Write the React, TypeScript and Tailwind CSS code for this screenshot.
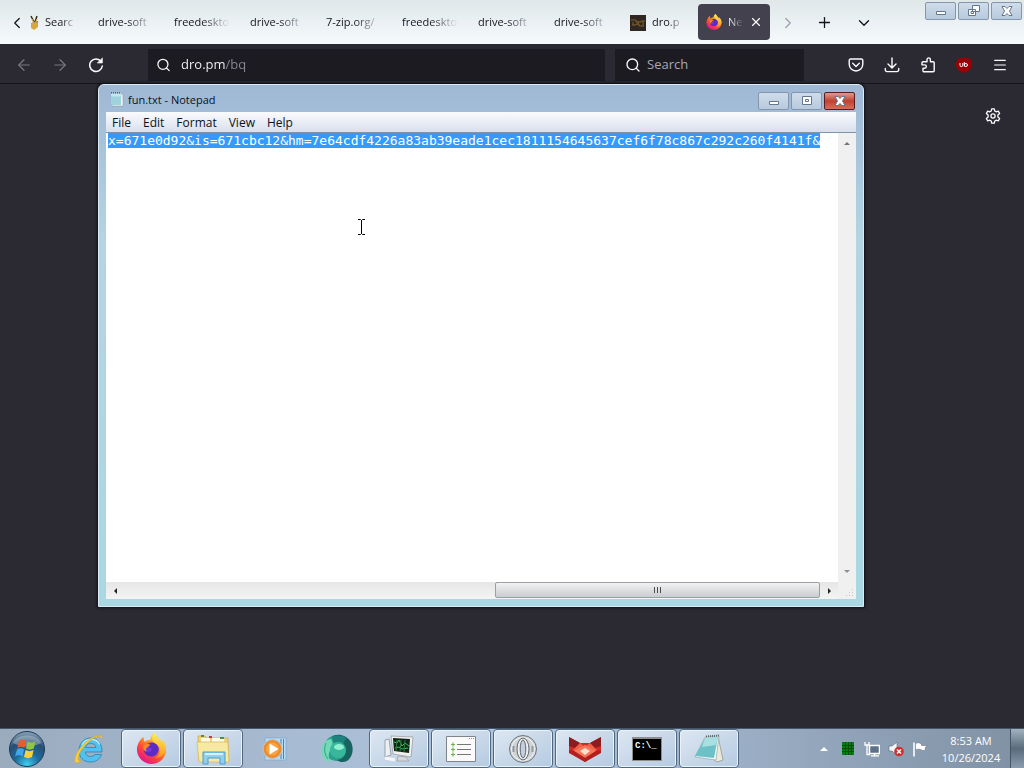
import React, { useEffect, useRef } from 'react';
import { ArrowLeft, ArrowRight, ChevronDown, ChevronLeft, ChevronRight, Menu, Plus, Search, X } from 'lucide-react';

const TABS = ['drive-soft', 'freedeskto', 'drive-soft', '7-zip.org/', 'freedeskto', 'drive-soft', 'drive-soft'];

const MENUS = ['File', 'Edit', 'Format', 'View', 'Help'];

const FILE_TEXT =
  'x=671e0d92&is=671cbc12&hm=7e64cdf4226a83ab39eade1cec1811154645637cef6f78c867c292c260f4141f&';

const FADE = '[mask-image:linear-gradient(to_right,black_50%,transparent_100%)]';

/* ---------- Icons ---------- */

const FirefoxIcon = ({ className, id }: { className: string; id: string }) => (
  <svg viewBox="0 0 32 32" className={className} aria-hidden="true">
    <defs>
      <linearGradient id={`${id}-body`} x1="0.85" y1="0.05" x2="0.25" y2="0.95">
        <stop offset="0" stopColor="#fff04a" />
        <stop offset="0.35" stopColor="#ffa51e" />
        <stop offset="0.65" stopColor="#ff4b35" />
        <stop offset="1" stopColor="#e3148a" />
      </linearGradient>
      <linearGradient id={`${id}-tail`} x1="0.5" y1="0" x2="0.5" y2="1">
        <stop offset="0" stopColor="#fff25a" />
        <stop offset="1" stopColor="#ff9a1f" />
      </linearGradient>
    </defs>
    <path d="M30 12c-1-3-3-5-5-6 1 2 2 4 2 5-2-4-5-6-7-10l-1-1c-3 2-4 5-4 7-3 0-4 1-6 2-1-1-1-3-1-5C4 6 2 11 1 15c-1 9 6 17 15 17s16-8 15-16z" fill={`url(#${id}-body)`} />
    <circle cx="16" cy="17" r="7.5" fill="#7a35d8" />
    <path d="M14 11c3-2 8 0 9 4 1 5-3 9-7 9-5 0-8-4-8-7 2 3 6 4 8 1 1-2-1-3-3-3-1-1 0-3 1-4z" fill="#5b2bc4" />
    <path d="M8 13c2-2 5-2 7-1-1 1-3 2-3 3-2 0-2 2-1 4-3 0-4-3-3-6z" fill="#ff8a22" />
    <path d="M19 0c-3 3-3 6-1 9 3 3 7 4 7 9 0 4-3 7-6 8 7 0 12-5 12-11-1-4-3-7-5-8l1 4c-2-4-6-7-8-11z" fill={`url(#${id}-tail)`} opacity="0.85" />
  </svg>
);

const ReloadIcon = () => (
  <svg viewBox="0 0 16 16" className="size-4" fill="none" stroke="#fbfbfe" strokeWidth="1.5" strokeLinecap="round" aria-hidden="true">
    <path d="M13.2 4.600A6.300 6.300 0 1 0 14.300 9" />
    <path d="M14.400 1.200v4.800H9.600z" fill="#fbfbfe" strokeWidth=".6" strokeLinejoin="round" />
  </svg>
);

const PocketIcon = () => (
  <svg viewBox="0 0 16 16" className="size-4" fill="none" stroke="#fbfbfe" strokeWidth="1.4" strokeLinecap="round" strokeLinejoin="round" aria-hidden="true">
    <path d="M2.5 2h11a1.3 1.3 0 0 1 1.3 1.3v4A6.8 6.8 0 0 1 8 14a6.8 6.8 0 0 1-6.8-6.7v-4A1.3 1.3 0 0 1 2.5 2z" />
    <path d="M4.700 6.300 8 9.400l3.300-3.100" />
  </svg>
);

const DownloadIcon = () => (
  <svg viewBox="0 0 16 16" className="size-4" fill="none" stroke="#fbfbfe" strokeWidth="1.4" strokeLinecap="round" strokeLinejoin="round" aria-hidden="true">
    <path d="M8 1v9.500M4 7l4 4 4-4" />
    <path d="M1.300 11.500v1.300A1.700 1.700 0 0 0 3 14.600h10a1.700 1.700 0 0 0 1.700-1.800v-1.300" />
  </svg>
);

const ExtensionsIcon = () => (
  <svg viewBox="0 0 16 16" className="size-4" fill="none" stroke="#fbfbfe" strokeWidth="1.4" strokeLinejoin="round" aria-hidden="true">
    <path d="M7 4.700V2.600a1.700 1.700 0 0 1 3.400 0v2.100h2.800a1 1 0 0 1 1 1v8.100a1 1 0 0 1-1 1H4a1 1 0 0 1-1-1v-2.600h1.700a1.600 1.600 0 0 0 0-3.300H2V5.700a1 1 0 0 1 1-1z" />
  </svg>
);

const UblockIcon = () => (
  <svg viewBox="0 0 16 16" className="size-4" aria-hidden="true">
    <path d="M8 0c2 1 4 1.300 6 1.600 1.300 2 2 4 2 6.400 0 3.500-3.500 7-8 8-4.500-1-8-4.500-8-8 0-2.400.7-4.400 2-6.400C4 1.300 6 1 8 0z" fill="#960006" />
    <path d="M4 6v2.200a1.400 1.400 0 0 0 2.800 0V6M8.300 5v4.500M8.300 8a1.600 1.500 0 1 0 3.200 0 1.600 1.500 0 1 0-3.200 0" fill="none" stroke="#fff" strokeWidth="1" />
  </svg>
);

const GearIcon = () => (
  <svg viewBox="0 0 16 16" className="size-4" fill="none" stroke="#fbfbfe" strokeWidth="1.300" strokeLinejoin="round" aria-hidden="true">
    <path d="M6.700.800h2.600l.5 2.200 1.300.8 2.200-.7 1.300 2.300-1.700 1.500v2.200l1.700 1.500-1.300 2.300-2.200-.7-1.300.8-.5 2.200H6.700L6.200 13l-1.300-.8-2.200.7-1.300-2.300 1.700-1.500V6.900L1.400 5.400l1.300-2.300 2.200.7L6.200 3z" />
    <circle cx="8" cy="8" r="2.100" />
  </svg>
);

const NotepadSmallIcon = () => (
  <svg viewBox="0 0 14 16" className="h-4 w-3.5" aria-hidden="true">
    <path d="M1 3h12v12H2z" fill="#fdfdfd" stroke="#7f97a6" strokeWidth=".6" />
    <path d="M1 2.500h10.500L11 14H1z" fill="#9ed2dc" />
    <path d="M1 2.500h10.500v3H1z" fill="#c4e6ec" />
    <path d="M1.500 2.500v-1.500M3.500 2.500v-1.500M5.500 2.500v-1.500M7.500 2.500v-1.500M9.500 2.500v-1.500" stroke="#4c6372" />
  </svg>
);

const StartIcon = () => (
  <svg viewBox="0 0 38 38" className="size-[38px]" aria-hidden="true">
    <defs>
      <radialGradient id="orb" cx="0.5" cy="0.95" r="0.9">
        <stop offset="0" stopColor="#3fd0f0" />
        <stop offset="0.4" stopColor="#1c6a9c" />
        <stop offset="0.75" stopColor="#284f72" />
        <stop offset="1" stopColor="#7d99b0" />
      </radialGradient>
    </defs>
    <circle cx="19" cy="19" r="17.500" fill="url(#orb)" stroke="#1f3c55" />
    <path d="M5 13C9 3 29 3 33 13c-8 5-20 4-28 0z" fill="#fff" opacity=".3" />
    <path d="M11 11c3-2 5-1 7 0l-1.500 7c-2-1-4-2-7 0z" fill="#ee5a2a" />
    <path d="M19.500 11.500c3 1.500 5 1.500 8 0l-1.700 7c-3 1.500-5 1.500-7.800 0z" fill="#8fc640" />
    <path d="M9 19.500c3-2 5-1 7 0l-1.500 7c-2-1-4-2-7.500 0z" fill="#45a4e2" />
    <path d="M17.600 20c3 1.500 5 1.500 8 0L24 27c-3 1.500-5 1.500-8 0z" fill="#fcd03c" />
  </svg>
);

const ExplorerEIcon = () => (
  <svg viewBox="0 0 32 32" className="size-8" aria-hidden="true">
    <path d="M29 19H12.500c0 3 2 4.500 5 4.500 2 0 3.500-.8 4.500-2h6.500C27 26 23 29 17.500 29 10 29 6 24 6 17.500S10.500 5 17.500 5 29.500 11 29 19zM12.500 14.500H23c-.4-2.500-2-4-5.300-4s-4.700 1.500-5.200 4z" fill="#52c1ee" stroke="#2384bd" strokeWidth=".8" />
    <path d="M9 12c2-4 6-5.500 9-5.500s7 1 8.500 5" fill="none" stroke="#b5e8fb" strokeWidth="1.500" />
    <path d="M29 6c1-3-1-4.500-5-3C14 5 4 17 2 25c-1 5 1 6 6 3-3 0-3.500-2-2-6C8 15 18 5 25 3.500c2-.4 3.500.500 4 2.500z" fill="#f7cf36" stroke="#d9a51f" strokeWidth=".5" />
  </svg>
);

const FolderIcon = () => (
  <svg viewBox="0 0 34 32" className="h-8 w-[34px]" aria-hidden="true">
    <path d="M2 3h7l1 2h22v23H3z" fill="#efd57b" stroke="#c9a748" strokeWidth=".7" />
    <path d="M5 5h9v4H5zM16 5h12v4H16z" fill="#fffbe6" />
    <path d="M5 3h3M24 5h4" stroke="#4b8f4f" strokeWidth="2" />
    <path d="M13 4h3" stroke="#c0422c" strokeWidth="2" />
    <path d="M1 9h31l1 20H3z" fill="#f8e9a1" stroke="#d3b458" strokeWidth=".7" />
    <path d="M7 19h22v12h-5v-6H12v6H7z" fill="#8fd0ef" stroke="#4c9cc9" />
    <path d="M9 21h18" stroke="#d7f1fc" strokeWidth="2" />
  </svg>
);

const MediaIcon = () => (
  <svg viewBox="0 0 28 26" className="h-[26px] w-7" aria-hidden="true">
    <path d="M4 2h21v22H4z" fill="#b9dcf5" stroke="#77a9d2" strokeWidth=".7" />
    <path d="M20 3v20M22.500 3v20" stroke="#3e84c2" />
    <circle cx="11.500" cy="13" r="9.500" fill="#ef8a26" stroke="#b8c3cc" strokeWidth="1.200" />
    <circle cx="11.500" cy="13" r="6.500" fill="#f7a445" />
    <path d="M8.500 7.500v11L17.500 13z" fill="#fff" />
  </svg>
);

const SphereIcon = () => (
  <svg viewBox="0 0 32 30" className="h-[30px] w-8" aria-hidden="true">
    <circle cx="16" cy="14" r="13" fill="#2ba08c" />
    <path d="M11 3C15-1 25 0 30 8c3 6 2 15-4 19-4 2-8 1-10-1 6-1 10-5 8-11-2-5-8-6-13-12z" fill="#176360" />
    <path d="M11 3c4-2 10-2 14 1l-3 7-9-2z" fill="#1d837c" />
    <path d="M10 5C3 6-1 13 1 20c1 5 5 8 9 9-3-5-3-10 0-14 2-3 2-7 0-10z" fill="#72d9b8" />
    <path d="M5 9c-2 5-2 11 2 16" stroke="#3d9f8a" fill="none" />
    <circle cx="17" cy="16" r="8" fill="#38b79c" />
    <ellipse cx="18" cy="13" rx="5" ry="3" fill="#8ff0d0" />
  </svg>
);

const MonitorIcon = () => (
  <svg viewBox="0 0 32 28" className="h-7 w-8" aria-hidden="true">
    <path d="M2 5l4-1 2 16-6 2z" fill="#eceff2" stroke="#7d868e" strokeWidth=".7" />
    <path d="M8 1l22 1-2 20-18-3z" fill="#f0f0ee" stroke="#92979b" strokeWidth=".7" />
    <path d="M10 3l17 1-1 14-15-2z" fill="#10251a" />
    <path d="M11 7l3 1 2-3 3 6 3-3 4 3M12 13l4-1 3 2 6-1" fill="none" stroke="#31c454" />
    <path d="M14 5l-1 11M18 5l-1 12M22 5l-1 12" stroke="#2a7a3e" strokeWidth="1" />
    <path d="M15 21l8 1 3 4H14z" fill="#d4d8db" stroke="#8e969c" strokeWidth=".6" />
    <path d="M2 23l10 2" stroke="#f7f7f7" strokeWidth="3" />
  </svg>
);

const ListIcon = () => (
  <svg viewBox="0 0 30 26" className="h-[26px] w-[30px]" aria-hidden="true">
    <path d="M.500.500h29v25H.500z" fill="#fafafa" stroke="#7d858c" />
    <path d="M11 8.500h14M11 13.500h14M11 18.500h14" stroke="#777" />
    <path d="M5 8.500h4M5 13.500h4M5 18.500h4M7 6.500v4M7 11.500v4M7 16.500v4" stroke="#6cb552" strokeWidth="1.200" />
    <path d="M23 2.500h5" stroke="#999" strokeDasharray="1 1" />
  </svg>
);

const OperaIcon = () => (
  <svg viewBox="0 0 30 30" className="size-[30px]" aria-hidden="true">
    <circle cx="15" cy="15" r="13.500" fill="#cfd3d6" stroke="#6c757c" />
    <circle cx="15" cy="15" r="11.500" fill="none" stroke="#f4f4f4" />
    <ellipse cx="15" cy="15" rx="6" ry="11" fill="#eef0f2" stroke="#5f676d" />
    <ellipse cx="15" cy="15" rx="2.800" ry="9" fill="#c3cfdf" stroke="#5f676d" />
    <path d="M5.500 12v6M24.500 12v6" stroke="#939a9f" strokeWidth="2" />
  </svg>
);

const FoxIcon = () => (
  <svg viewBox="0 0 34 26" className="h-[26px] w-[34px]" aria-hidden="true">
    <path d="M1 1l11 6h10l11-6v15L17 26 1 16z" fill="#cf2c26" />
    <path d="M1 1l11 6-5 5-6-2zM33 1L22 7l5 5 6-2z" fill="#8c1c1d" />
    <path d="M12 7l5 4 5-4 7 7-12 6-12-6z" fill="#f0604a" />
    <path d="M6 15l11-6 11 6-11 7z" fill="#f27a5b" />
    <path d="M12 15l5-3 5 3-5 4z" fill="#fce0cf" />
    <path d="M1 14l5 1 11 7 11-7 5-1v3L17 26 1 17z" fill="#b3201f" />
  </svg>
);

const NotepadLargeIcon = () => (
  <svg viewBox="0 0 32 30" className="h-[30px] w-8" aria-hidden="true">
    <path d="M25 2l5 24-6 2-4-3z" fill="#e9ead9" stroke="#8a8f88" strokeWidth=".7" />
    <path d="M12 3l14-1-3 24-21-3z" fill="#f5fafa" stroke="#92a5ab" strokeWidth=".7" />
    <path d="M12 4l13-1-4 21-19-2z" fill="#6cc1c7" />
    <path d="M12 4l13-1-2 8-14 2z" fill="#a8dfe1" />
    <path d="M13 2.500l13-1" stroke="#5d686d" strokeWidth="2" strokeDasharray="1 1" />
  </svg>
);

/* ---------- Window caption buttons ---------- */

const CaptionButton = ({ kind, danger }: { kind: 'min' | 'max' | 'restore' | 'close'; danger?: boolean }) => (
  <button
    aria-label={kind}
    className={
      danger
        ? 'flex h-[18px] w-[31px] items-center justify-center rounded-xs border border-[#5c1a1e] bg-linear-to-b from-[#dc9a8f] via-[#c0402f] to-[#d4705c]'
        : 'flex h-[18px] w-[31px] items-center justify-center rounded-xs border border-[#8496ac] bg-linear-to-b from-[#d0dcea] to-[#b7cade]'
    }
  >
    <svg viewBox="0 0 14 12" className="h-3 w-3.5" fill="#fff" stroke="#66768a" aria-hidden="true">
      {kind === 'min' && <path d="M2.500 6.500h9v3h-9z" />}
      {kind === 'max' && <path d="M2.500 1.500h9v8h-9zM5.500 4.500h3v2h-3z" />}
      {kind === 'restore' && <path d="M5.500.500h7v6h-7zM1.500 4.500h7v6h-7zM4 6.500h2.500v2H4z" />}
      {kind === 'close' && <path d="M2 1.500h3l2 2 2-2h3L9.500 6l2.500 4.500H9l-2-2-2 2H2L4.500 6z" />}
    </svg>
  </button>
);

/* ---------- Browser ---------- */

const TabStrip = () => (
  <header className="flex h-11 items-start bg-linear-to-b from-[#dfe7e9] to-[#f6fafd] pt-px text-[11px] text-[#15141a]">
    <button aria-label="Scroll tabs left" className="flex h-[43px] w-[30px] items-center justify-center pl-1">
      <ChevronLeft size={18} strokeWidth={1.7} />
    </button>
    <button className="flex h-[43px] w-[60px] items-center gap-1.5">
      <svg viewBox="0 0 9 16" className="h-4 w-[9px] shrink-0" aria-hidden="true">
        <path d="M1 1l3 6M7 1L5 7M1 9l7-2" stroke="#3a2b1b" strokeWidth="1.500" />
        <path d="M1 8l7-1v5l-4 3-3-2z" fill="#d8a63a" />
        <path d="M2 4l2 4M7 4L5 8" stroke="#e0b040" />
      </svg>
      <span className={`w-8 text-left whitespace-nowrap ${FADE}`}>Searc</span>
    </button>
    {TABS.map((tab, i) => (
      <button key={i} className="flex h-[43px] w-[76px] items-center px-2">
        <span className={`w-14 text-left whitespace-nowrap ${FADE}`}>{tab}</span>
      </button>
    ))}
    <button className="flex h-[43px] w-[76px] items-center gap-1.5 px-2">
      <svg viewBox="0 0 16 16" className="size-4 shrink-0" aria-hidden="true">
        <path d="M0 0h16v16H0z" fill="#2e2722" />
        <path d="M1 5h5v2h5v-1h4M2 10h4v-1h3v2h5M3 7v3M8 6v4M13 6v5" fill="none" stroke="#80602a" />
      </svg>
      <span className={`w-8 text-left whitespace-nowrap ${FADE}`}>dro.p</span>
    </button>
    <div className="mt-[3px] flex h-9 w-[72px] items-center gap-1.5 rounded bg-[#42414d] pl-2 text-[#fbfbfe]">
      <FirefoxIcon id="ff-tab" className="size-4 shrink-0" />
      <button className="w-4 text-left whitespace-nowrap [mask-image:linear-gradient(to_right,black_0%,transparent_100%)]">
        Ne
      </button>
      <button aria-label="Close tab" className="flex h-6 w-3 items-center justify-center">
        <X size={14} strokeWidth={2} className="shrink-0" />
      </button>
    </div>
    <button aria-label="Scroll tabs right" className="flex h-[43px] w-9 items-center justify-center text-gray-400">
      <ChevronRight size={18} strokeWidth={1.7} />
    </button>
    <button aria-label="New tab" className="flex h-[43px] w-9 items-center justify-center">
      <Plus size={17} strokeWidth={1.8} />
    </button>
    <button aria-label="List all tabs" className="ml-1 flex h-[43px] w-9 items-center justify-center">
      <ChevronDown size={18} strokeWidth={1.8} />
    </button>
    <div className="mt-px mr-0.5 ml-auto flex gap-0.5">
      <CaptionButton kind="min" />
      <CaptionButton kind="restore" />
      <CaptionButton kind="close" />
    </div>
  </header>
);

const Toolbar = () => (
  <nav className="flex h-10 items-center border-b border-[#15141a] bg-[#2b2a33] px-1.5 pt-0.5 text-[#fbfbfe]">
    <button aria-label="Back" className="flex size-9 items-center justify-center text-[#77767e]">
      <ArrowLeft size={18} strokeWidth={1.6} />
    </button>
    <button aria-label="Forward" className="flex size-9 items-center justify-center text-[#77767e]">
      <ArrowRight size={18} strokeWidth={1.6} />
    </button>
    <button aria-label="Reload" className="flex size-9 items-center justify-center">
      <ReloadIcon />
    </button>
    <label className="ml-[34px] flex h-8 flex-1 items-center gap-2.5 bg-[#1c1b22] px-2">
      <Search size={16} strokeWidth={2} />
      <input
        aria-label="Address"
        defaultValue="dro.pm/bq"
        className="w-full min-w-0 bg-linear-to-r from-[#fbfbfe] from-[44px] to-[#8b8a93] to-[44px] bg-clip-text pt-px text-[13px] text-transparent caret-white outline-none"
      />
    </label>
    <label className="ml-2.5 flex h-8 w-[189px] items-center gap-1.5 bg-[#1c1b22] px-2.5">
      <Search size={16} strokeWidth={2} className="shrink-0" />
      <input
        aria-label="Search"
        placeholder="Search"
        className="w-full min-w-0 bg-transparent pt-px text-[13px] outline-none placeholder:text-[#a9a8b0]"
      />
    </label>
    <div className="ml-[34px] flex">
      <button aria-label="Save to Pocket" className="flex size-9 items-center justify-center"><PocketIcon /></button>
      <button aria-label="Downloads" className="flex size-9 items-center justify-center"><DownloadIcon /></button>
      <button aria-label="Extensions" className="flex size-9 items-center justify-center"><ExtensionsIcon /></button>
      <button aria-label="uBlock" className="flex size-9 items-center justify-center"><UblockIcon /></button>
      <button aria-label="Menu" className="flex size-9 items-center justify-center"><Menu size={16} strokeWidth={1.8} /></button>
    </div>
  </nav>
);

/* ---------- Notepad ---------- */

const Notepad = () => {
  const editor = useRef<HTMLTextAreaElement>(null);

  useEffect(() => {
    editor.current?.focus({ preventScroll: true });
    editor.current?.select();
  }, []);

  return (
    <section className="ml-[98px] flex-1 rounded-t-md border border-[#dceaf4] bg-linear-to-b from-[#9fb8d5] via-[#b4d5e2] via-30% to-[#a9d8e2] px-[7px] pb-[7px] text-[#0b1220] shadow-[0_0_3px_1px_#101018]">
      <div className="flex h-[27px] items-center gap-1 pr-px pl-1">
        <NotepadSmallIcon />
        <h1 className="flex-1 pt-1 text-[11px]">fun.txt - Notepad</h1>
        <div className="flex gap-0.5 pt-1">
          <CaptionButton kind="min" />
          <CaptionButton kind="max" />
          <CaptionButton kind="close" danger />
        </div>
      </div>

      <div className="flex h-[21px] items-center gap-3 border-b border-[#7f93aa] bg-linear-to-b from-[#fafbfd] to-[#d9dfec] px-1.5 pt-px text-[12px]">
        {MENUS.map((menu) => (
          <button key={menu}>{menu}</button>
        ))}
      </div>

      <div className="grid grid-cols-[1fr_18px] bg-[#f0f0f0]">
        <div className="relative h-[449px] bg-white">
          <textarea
            ref={editor}
            readOnly
            wrap="off"
            spellCheck={false}
            aria-label="Document text"
            defaultValue={FILE_TEXT}
            className="block size-full resize-none overflow-hidden pt-px pl-0.5 font-['DejaVu_Sans_Mono',monospace] text-[13px] leading-[13px] outline-none selection:bg-[rgba(51,153,255,0.99)] selection:text-white"
          />
          {/* text cursor */}
          <svg viewBox="0 0 9 18" className="pointer-events-none absolute top-[85px] left-[251px] h-[18px] w-[9px]" aria-hidden="true">
            <path d="M1 1.500h2.500l1 1 1-1H8M1 16.500h2.500l1-1 1 1H8M4.500 2v14" fill="none" stroke="#000" />
          </svg>
        </div>

        <div className="flex flex-col items-center justify-between py-1.5">
          <button aria-label="Scroll up" className="size-2">
            <svg viewBox="0 0 8 8" className="size-2"><path d="M1 6l3-3 3 3z" fill="#6f7782" /></svg>
          </button>
          <button aria-label="Scroll down" className="size-2">
            <svg viewBox="0 0 8 8" className="size-2"><path d="M1 2l3 3 3-3z" fill="#8c9198" /></svg>
          </button>
        </div>

        <div className="flex h-[17px] items-center bg-linear-to-b from-[#e6e6e6] to-[#f4f4f4]">
          <button aria-label="Scroll left" className="flex h-4 w-[17px] items-center justify-center">
            <svg viewBox="0 0 8 8" className="size-2"><path d="M6 1L3 4l3 3z" fill="#222" /></svg>
          </button>
          <div className="flex h-full flex-1 justify-end">
            <button
              aria-label="Horizontal scroll position"
              className="flex h-4 w-[325px] items-center justify-center rounded-xs border border-[#9b9fa3] bg-linear-to-b from-[#f2f2f2] to-[#c9cdcf]"
            >
              <svg viewBox="0 0 8 6" className="h-1.5 w-2" stroke="#4a4e52"><path d="M.500 0v6M3.500 0v6M6.500 0v6" /></svg>
            </button>
          </div>
          <button aria-label="Scroll right" className="flex h-4 w-[18px] items-center justify-center">
            <svg viewBox="0 0 8 8" className="size-2"><path d="M3 1l3 3-3 3z" fill="#222" /></svg>
          </button>
        </div>

        {/* resize grip */}
        <svg viewBox="0 0 18 17" className="h-[17px] w-[18px]" stroke="#c6c8ca" strokeWidth="1" strokeDasharray="1 2" aria-hidden="true">
          <path d="M14.500 7v9M11.500 10v6M8.500 13v3" />
        </svg>
      </div>
    </section>
  );
};

/* ---------- Taskbar ---------- */

interface TaskProps {
  label: string;
  running?: boolean;
  children: React.ReactNode;
}

const Task = ({ label, running, children }: TaskProps) => (
  <button
    aria-label={label}
    className={
      running
        ? 'flex h-[39px] w-[60px] items-center justify-center rounded-sm border border-[#506780] bg-linear-to-br from-[#dde7f2] to-[#b5cae1] shadow-[inset_0_0_0_1px_#eaf2fa]'
        : 'flex h-[39px] w-[60px] items-center justify-center'
    }
  >
    {children}
  </button>
);

const Taskbar = () => (
  <footer className="flex h-10 items-stretch border-t border-[#46566a] bg-linear-to-r from-[#9aabbe] via-[#b0c6e0] via-50% to-[#8091a4]">
    <button aria-label="Start" className="flex w-[54px] items-center justify-center">
      <StartIcon />
    </button>
    <div className="ml-[5px] flex gap-0.5">
      <Task label="Internet Explorer"><ExplorerEIcon /></Task>
      <Task label="Firefox" running><FirefoxIcon id="ff-task" className="size-[31px]" /></Task>
      <Task label="Windows Explorer" running><FolderIcon /></Task>
      <Task label="Media Player"><MediaIcon /></Task>
      <Task label="Web browser"><SphereIcon /></Task>
      <Task label="System monitor" running><MonitorIcon /></Task>
      <Task label="Task list" running><ListIcon /></Task>
      <Task label="Opera" running><OperaIcon /></Task>
      <Task label="Fox" running><FoxIcon /></Task>
      <Task label="Command Prompt" running>
        <span className="flex h-6 w-[30px] border border-t-2 border-[#8d8d8d] bg-black pt-0.5 pl-0.5 font-['Liberation_Mono',monospace] text-[9px] leading-[10px] font-bold text-white">
          C:\_
        </span>
      </Task>
      <Task label="Notepad" running><NotepadLargeIcon /></Task>
    </div>

    <div className="ml-auto flex items-center text-white">
      <button aria-label="Show hidden icons" className="flex w-6 justify-center">
        <svg viewBox="0 0 8 5" className="h-[5px] w-2"><path d="M0 5l4-4 4 4z" fill="#fff" /></svg>
      </button>
      <button aria-label="CPU activity" className="flex w-6 justify-center">
        <svg viewBox="0 0 12 13" className="h-[13px] w-3">
          <path d="M0 0h12v13H0z" fill="#0a7a14" />
          <path d="M0 3.500h12M0 6.500h12M0 9.500h12M3.500 0v13M6.500 0v13M9.500 0v13" stroke="#04500a" />
        </svg>
      </button>
      <button aria-label="Network" className="flex w-6 justify-center">
        <svg viewBox="0 0 16 16" className="size-4" fill="none" stroke="#fff">
          <path d="M5.500 4.500h10v8h-10z" fill="#5c7186" strokeWidth="1.500" />
          <path d="M7 14.800h8M10.500 12v3M1 1v3h4V1M3 4v9.500h3" strokeWidth="1.300" />
        </svg>
      </button>
      <button aria-label="Volume muted" className="flex w-6 justify-center">
        <svg viewBox="0 0 16 16" className="size-4">
          <path d="M1 5h3l5-4v13l-5-4H1z" fill="#f4f6f8" stroke="#5b6875" strokeWidth=".6" />
          <circle cx="11" cy="10.500" r="4.800" fill="#d12f2f" />
          <path d="M9 8.500l4 4M13 8.500l-4 4" stroke="#fff" strokeWidth="1.500" />
        </svg>
      </button>
      <button aria-label="Action Center" className="flex w-6 justify-center">
        <svg viewBox="0 0 16 16" className="size-4">
          <path d="M2 1.500v14" stroke="#fff" strokeWidth="1.600" />
          <path d="M3.500 2.500c2-1 4-1 6 .500v1.500h5.500l-2 2.500.500 2c-2 1-3.500.500-5-.500-2-.500-3.500-.500-5 .500z" fill="#fff" stroke="#5b6875" strokeWidth=".5" />
        </svg>
      </button>
      <button className="w-[78px] text-center text-[11px] leading-[17px]">
        8:53 AM
        <br />
        10/26/2024
      </button>
      <button
        aria-label="Show desktop"
        className="h-full w-[14px] border-l border-[#435567] bg-linear-to-b from-[#a4b2bf] via-[#596c7d] to-[#8b9daf]"
      />
    </div>
  </footer>
);

export default function App() {
  return (
    <div className="flex min-h-screen flex-col bg-[#2b2a33] font-['Open_Sans','Noto_Sans',sans-serif]">
      <TabStrip />
      <Toolbar />
      <main className="flex flex-1 items-start">
        <Notepad />
        <aside className="flex w-40 justify-end px-[23px] py-6">
          <button aria-label="Personalize new tab">
            <GearIcon />
          </button>
        </aside>
      </main>
      <Taskbar />
    </div>
  );
}
